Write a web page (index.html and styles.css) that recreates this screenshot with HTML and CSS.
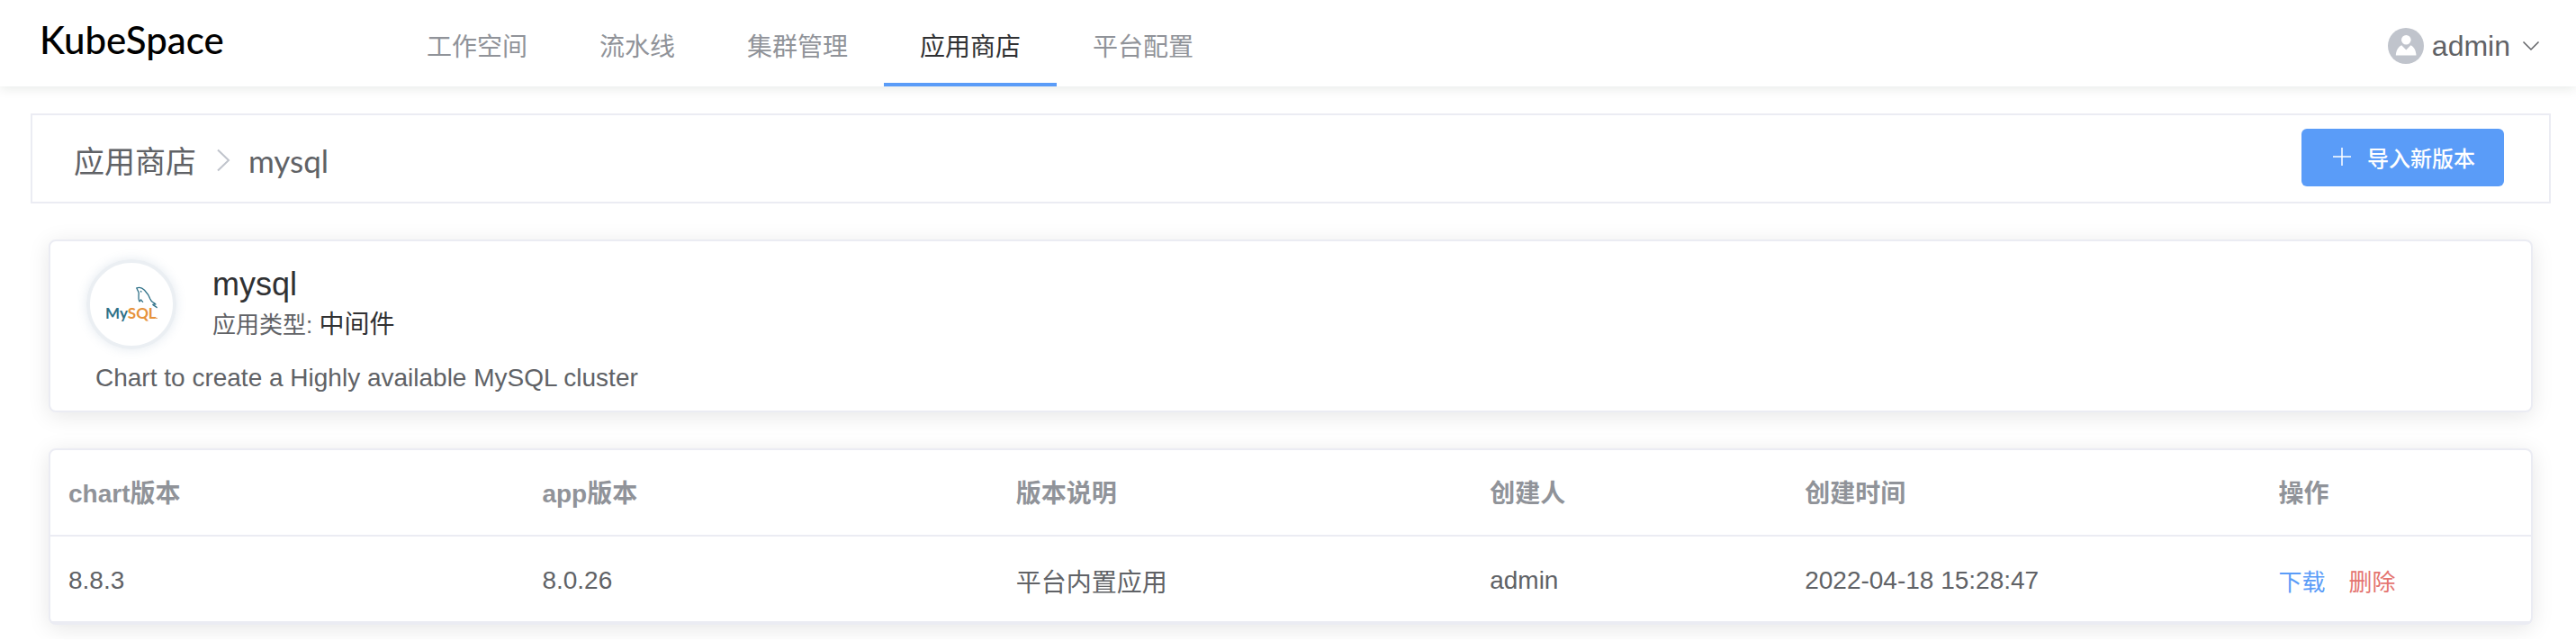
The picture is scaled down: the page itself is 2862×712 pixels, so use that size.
FILE: index.html
```html
<!DOCTYPE html>
<html lang="zh-CN">
<head>
<meta charset="utf-8">
<title>KubeSpace</title>
<link rel="stylesheet" href="styles.css">
</head>
<body>
<header class="topbar">
  <a class="brand" href="#">KubeSpace</a>
  <nav class="menu">
    <a class="menu-item" href="#">工作空间</a>
    <a class="menu-item" href="#">流水线</a>
    <a class="menu-item" href="#">集群管理</a>
    <a class="menu-item active" href="#" aria-current="page">应用商店</a>
    <a class="menu-item" href="#">平台配置</a>
  </nav>
  <button class="user" type="button">
    <svg class="avatar" viewBox="0 0 40 40" aria-hidden="true">
      <circle cx="20" cy="20" r="20" fill="#c0c4cc"/>
      <circle cx="20.300" cy="13.300" r="5.300" fill="#fff"/>
      <path d="M8.800 30.500c.3-5.500 2.700-9.500 6.400-11.300l5.100 5.300 5.100-5.300c3.700 1.800 5.800 5.800 6.100 11.300z" fill="#fff"/>
    </svg>
    <span>admin</span>
    <svg class="caret" viewBox="0 0 20 12" aria-hidden="true"><path d="M1.500 1.500 10 10l8.500-8.500" fill="none" stroke="#606266" stroke-width="1.500"/></svg>
  </button>
</header>
<main class="content">
  <div class="titlebar">
    <nav class="crumbs">
      <a href="#">应用商店</a>
      <svg class="crumb-sep" viewBox="0 0 16 26" aria-hidden="true"><path d="M2 1.500 14 13 2 24.500" fill="none" stroke="#c0c4cc" stroke-width="2"/></svg>
      <span class="crumb-name">mysql</span>
    </nav>
    <button class="import" type="button">
      <svg class="plus" viewBox="0 0 20 20" aria-hidden="true"><path d="M10 0v20M0 10h20" stroke="#fff" stroke-width="1.500"/></svg>
      导入新版本
    </button>
  </div>
  <section class="card app">
    <div class="app-head">
      <div class="app-logo">
        <svg viewBox="0 0 92 92" role="img" aria-label="MySQL">
          <text class="logo-text" x="17" y="62"><tspan fill="#2f7188">My</tspan><tspan fill="#e6923a">SQL</tspan></text>
          <path d="M72 61.500h3" stroke="#e9a968" stroke-width="1"/>
          <g fill="none" stroke="#2f7188" stroke-width="1.300" stroke-linecap="round" stroke-linejoin="round">
            <path d="M52 28c2.500-1.200 6-.3 8.500 2.200 3.600 3.800 5 6 6.300 9.800.7 1.900 1.500 2.800 3.500 4 1.400.9 2.300 1.300 2.700 2-1.500-.2-2.400 0-3.200.4.800 1 2.600 1.400 4.400 3.100"/>
            <path d="M52 28c.2 2 2.100 3.300 2.200 5.500 0 3-.8 6 .5 9 .4.900 1.300-.3 1.800-1.700.5 1 1.200 1.900 2.100 2.500"/>
            <path d="M56.500 31.500l.4.500"/>
          </g>
        </svg>
      </div>
      <div>
        <h1 class="app-name">mysql</h1>
        <p class="app-type">应用类型: <span>中间件</span></p>
      </div>
    </div>
    <p class="app-desc">Chart to create a Highly available MySQL cluster</p>
  </section>
  <section class="card">
    <table class="versions">
      <colgroup><col class="wide"><col class="wide"><col class="wide"><col class="narrow"><col class="wide"><col></colgroup>
      <thead>
        <tr><th>chart版本</th><th>app版本</th><th>版本说明</th><th>创建人</th><th>创建时间</th><th>操作</th></tr>
      </thead>
      <tbody>
        <tr><td>8.8.3</td><td>8.0.26</td><td>平台内置应用</td><td>admin</td><td>2022-04-18 15:28:47</td>
        <td><div class="actions"><a class="download" href="#">下载</a><a class="delete" href="#">删除</a></div></td></tr>
      </tbody>
    </table>
  </section>
</main>
</body>
</html>
```
FILE: styles.css
```css
* { box-sizing: border-box; }
body {
  margin: 0;
  background: #fff;
  color: #606266;
  font-family: "Liberation Sans", "Noto Sans CJK SC", sans-serif;
  font-size: 28px;
}
a { color: inherit; text-decoration: none; }
button { font: inherit; color: inherit; border: 0; background: none; padding: 0; cursor: pointer; }
h1, p { margin: 0; font-weight: 400; }
svg { display: block; flex: none; }

.topbar {
  display: flex;
  height: 96px;
  padding: 0 40px 0 44px;
  box-shadow: 0 2px 12px rgba(0, 41, 21, 0.1);
}
.brand {
  width: 390px;
  color: #000;
  font-family: Lato, sans-serif;
  font-size: 42px;
  font-weight: 500;
  line-height: 88px;
}
.menu { display: flex; }
.menu-item {
  height: 96px;
  padding: 7px 40px 0;
  border-bottom: 4px solid transparent;
  color: #909399;
  line-height: 92px;
}
.menu-item.active { color: #303133; border-color: #5a9cf8; }
.user {
  display: flex;
  align-items: center;
  gap: 9px;
  margin-left: auto;
  padding-top: 6px;
  font-size: 32px;
}
.avatar { width: 40px; height: 40px; }
.caret { width: 20px; height: 12px; margin-left: 4px; }

.content { padding: 30px 28px 16px 34px; }
.titlebar {
  display: flex;
  align-items: center;
  justify-content: space-between;
  height: 100px;
  padding: 0 50px 2px 46px;
  border: 2px solid #ebecf3;
}
.crumbs { display: flex; align-items: center; padding-top: 5px; font-size: 34px; }
.crumb-sep { width: 16px; height: 26px; margin: 0 20px 0 22px; }
.crumb-name { font-family: Lato, sans-serif; font-size: 35px; }
.import {
  display: flex;
  align-items: center;
  gap: 18px;
  height: 64px;
  padding: 0 32px 2px 35px;
  border-radius: 6px;
  background: #5a9cf8;
  color: #fff;
  font-size: 24px;
  font-weight: 500;
}
.plus { width: 20px; height: 20px; }

.card {
  margin: 40px 20px 0;
  border: 2px solid #ebecf3;
  border-radius: 8px;
  background: #fff;
  box-shadow: 0 4px 24px rgba(0, 0, 0, 0.1);
}
.app { padding: 20px 40px 16px; }
.app-head { display: flex; align-items: center; gap: 40px; }
.app-logo {
  width: 100px;
  height: 100px;
  border: 4px solid #ebeff3;
  border-radius: 50%;
  box-shadow: 0 0 12px rgba(120, 150, 180, 0.2);
}
.logo-text { font-family: Lato, sans-serif; font-size: 17px; font-weight: 700; }
.app-name { color: #303133; font-size: 36px; line-height: 44px; }
.app-type { padding-top: 2px; font-size: 26px; line-height: 42px; }
.app-type span { color: #303133; font-size: 28px; }
.app-desc { margin-top: 12px; padding-left: 10px; line-height: 40px; }

.versions { width: 100%; table-layout: fixed; border-collapse: separate; border-spacing: 0; }
.wide { width: 19.1%; }
.narrow { width: 12.7%; }
th, td {
  height: 96px;
  padding: 0 20px;
  border-bottom: 2px solid #ebecf3;
  text-align: left;
  vertical-align: middle;
}
th { padding-bottom: 2px; color: #909399; font-weight: 700; }
td { padding-top: 3px; }
.actions { display: flex; gap: 26px; font-size: 26px; }
.download { color: #5a9cf8; }
.delete { color: #e47470; }
```
